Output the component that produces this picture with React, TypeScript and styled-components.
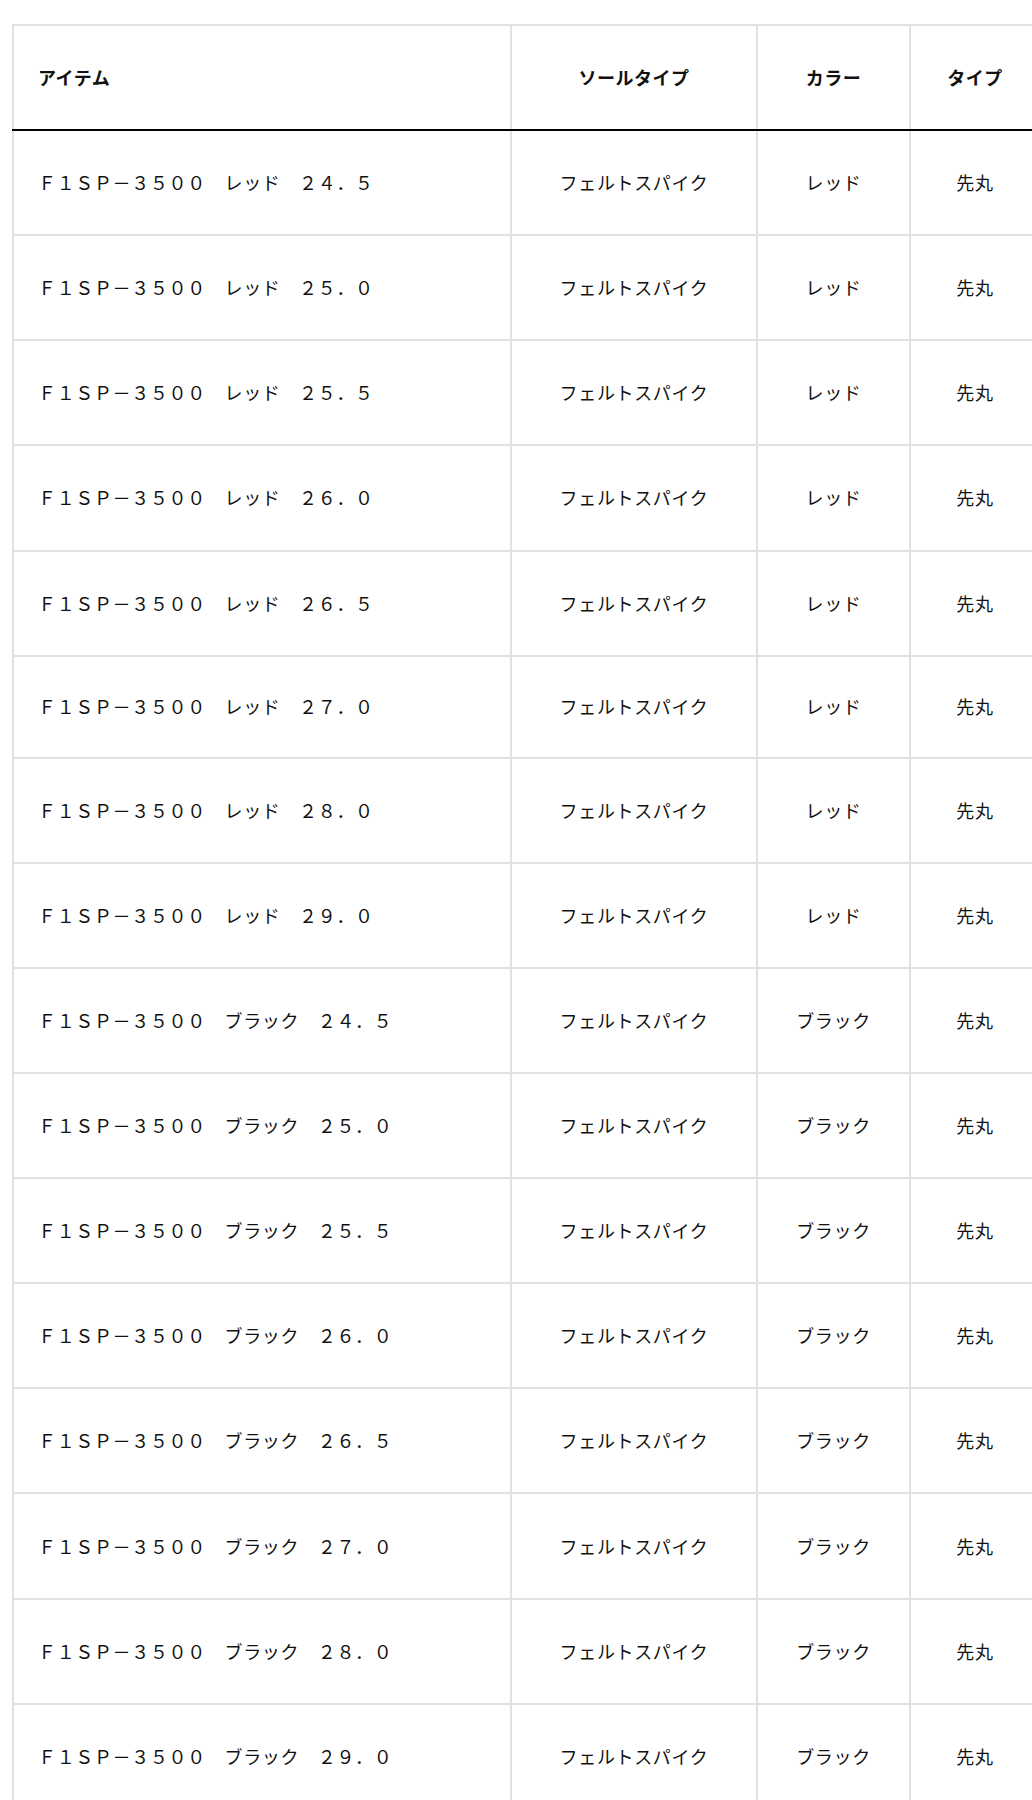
import React from 'react';
import styled, { createGlobalStyle } from 'styled-components';

const GlobalStyle = createGlobalStyle`
    html, body {
        margin: 0;
        padding: 0;
        background: #ffffff;
        overflow-x: hidden;
    }
    body {
        font-family: "Noto Sans CJK JP", "Noto Sans", sans-serif;
        color: #111111;
    }
`;

const Wrapper = styled.div`
    padding: 24px 0 0 12px;
    overflow: hidden;
`;

const Table = styled.table`
    width: 1029px;
    table-layout: fixed;
    border-collapse: collapse;
    border: 2px solid #e1e1e1;
    font-size: 18px;
    line-height: 27px;
`;

const HeadRow = styled.tr`
    height: 105px;
`;

const HeadCell = styled.th<{ $left?: boolean }>`
    padding: 0;
    padding-left: ${(p) => (p.$left ? '24px' : '0')};
    text-align: ${(p) => (p.$left ? 'left' : 'center')};
    font-weight: 700;
    letter-spacing: 0.5px;
    color: #111111;
    border: 2px solid #e1e1e1;
    border-bottom: 2px solid #000000;
    vertical-align: middle;
`;

const Row = styled.tr<{ $short?: boolean }>`
    height: ${(p) => (p.$short ? '101.8px' : '105.15px')};
`;

const Cell = styled.td<{ $left?: boolean }>`
    padding: 0;
    padding-left: ${(p) => (p.$left ? '24px' : '0')};
    text-align: ${(p) => (p.$left ? 'left' : 'center')};
    border: 2px solid #e1e1e1;
    vertical-align: middle;
    white-space: nowrap;
    letter-spacing: 0.65px;
`;

interface Item {
    name: string;
    color: string;
    size: string;
}

const sizes = ['２４．５', '２５．０', '２５．５', '２６．０', '２６．５', '２７．０', '２８．０', '２９．０'];

const items: Item[] = [
    ...sizes.map((size) => ({ name: 'Ｆ１ＳＰ－３５００　レッド　', color: 'レッド', size })),
    ...sizes.map((size) => ({ name: 'Ｆ１ＳＰ－３５００　ブラック　', color: 'ブラック', size })),
];

const App = () => {
    return (
        <Wrapper>
            <GlobalStyle />
            <Table>
                <colgroup>
                    <col style={{ width: 498 }} />
                    <col style={{ width: 246 }} />
                    <col style={{ width: 153 }} />
                    <col style={{ width: 130 }} />
                </colgroup>
                <thead>
                    <HeadRow>
                        <HeadCell $left>アイテム</HeadCell>
                        <HeadCell>ソールタイプ</HeadCell>
                        <HeadCell>カラー</HeadCell>
                        <HeadCell>タイプ</HeadCell>
                    </HeadRow>
                </thead>
                <tbody>
                    {items.map((item, i) => (
                        <Row key={i} $short={i === 5}>
                            <Cell $left>{item.name + item.size}</Cell>
                            <Cell>フェルトスパイク</Cell>
                            <Cell>{item.color}</Cell>
                            <Cell>先丸</Cell>
                        </Row>
                    ))}
                </tbody>
            </Table>
        </Wrapper>
    );
};

export default App;
